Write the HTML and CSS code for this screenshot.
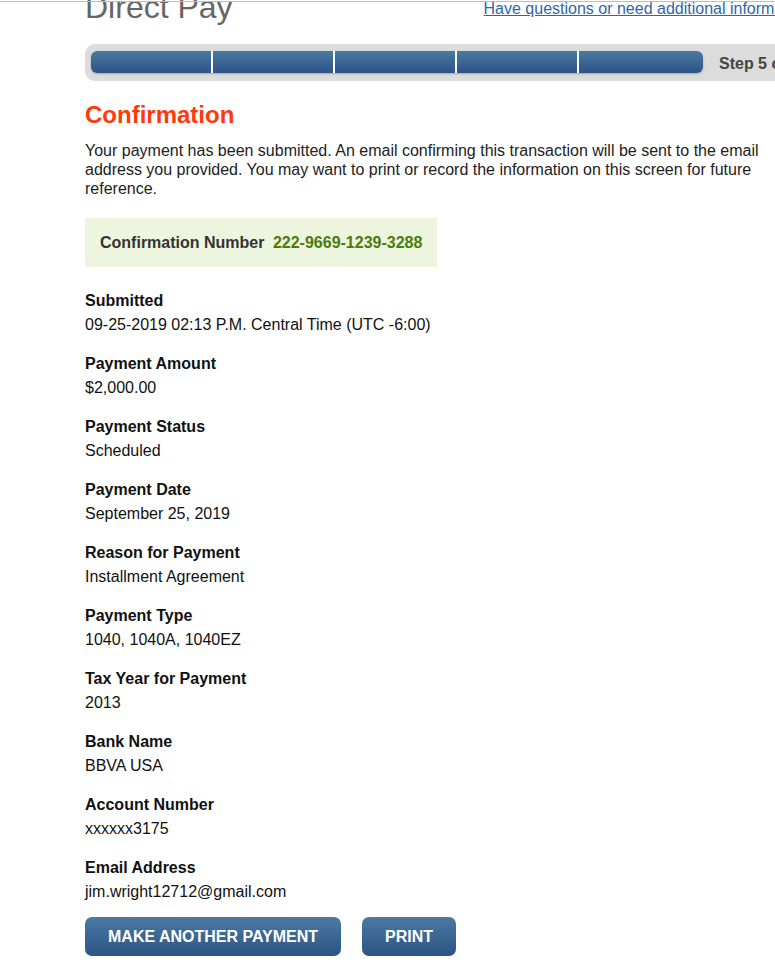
FILE: index.html
```html
<!DOCTYPE html>
<html lang="en">
<head>
<meta charset="utf-8">
<title>Direct Pay - Confirmation</title>
<link rel="stylesheet" href="styles.css">
</head>
<body>
<div class="topline"></div>
<div class="page">
  <header class="header">
    <h1 class="title">Direct Pay</h1>
    <a class="help-link" href="#">Have questions or need additional information?</a>
  </header>

  <div class="progress">
    <div class="progress-bar">
      <span class="seg"></span><span class="seg"></span><span class="seg"></span><span class="seg"></span><span class="seg seg-last"></span>
    </div>
    <span class="step">Step 5 of 5</span>
  </div>

  <h2 class="heading">Confirmation</h2>
  <p class="intro">Your payment has been submitted. An email confirming this transaction will be sent to the email address you provided. You may want to print or record the information on this screen for future reference.</p>

  <div class="conf-box">
    <span class="conf-label">Confirmation Number</span>
    <span class="conf-number">222-9669-1239-3288</span>
  </div>

  <dl class="details">
    <dt>Submitted</dt><dd>09-25-2019 02:13 P.M. Central Time (UTC -6:00)</dd>
    <dt>Payment Amount</dt><dd>$2,000.00</dd>
    <dt>Payment Status</dt><dd>Scheduled</dd>
    <dt>Payment Date</dt><dd>September 25, 2019</dd>
    <dt>Reason for Payment</dt><dd>Installment Agreement</dd>
    <dt>Payment Type</dt><dd>1040, 1040A, 1040EZ</dd>
    <dt>Tax Year for Payment</dt><dd>2013</dd>
    <dt>Bank Name</dt><dd>BBVA USA</dd>
    <dt>Account Number</dt><dd>xxxxxx3175</dd>
    <dt>Email Address</dt><dd>jim.wright12712@gmail.com</dd>
  </dl>

  <div class="actions">
    <button class="btn" type="button">MAKE ANOTHER PAYMENT</button>
    <button class="btn" type="button">PRINT</button>
  </div>
</div>
</body>
</html>
```

FILE: styles.css
```css
html, body {
  margin: 0;
  padding: 0;
  overflow: hidden;
  background: #ffffff;
}

body {
  font-family: "Liberation Sans", Arial, sans-serif;
  font-size: 16px;
  color: #1a1a1a;
}

.topline {
  position: fixed;
  top: 1px;
  left: 0;
  right: 0;
  height: 1px;
  background: #bdbdbd;
  z-index: 5;
}

.page {
  padding-left: 85px;
  width: 733px;
}

.header {
  display: flex;
  align-items: flex-start;
  justify-content: space-between;
  margin-top: -11px;
}

.title {
  margin: 0;
  font-size: 32px;
  line-height: 36px;
  font-weight: normal;
  color: #666666;
}

.help-link {
  margin-top: 11px;
  font-size: 16px;
  line-height: 18px;
  color: #2f66a8;
  text-decoration: underline;
  white-space: nowrap;
}

.progress {
  margin-top: 19px;
  display: flex;
  align-items: center;
  gap: 16px;
  background: #dcdcdc;
  border-radius: 10px;
  padding: 7px 6px 8px 6px;
}

.progress-bar {
  display: flex;
  gap: 2px;
  width: 612px;
  height: 22px;
  background: #ffffff;
  border-radius: 6px;
  overflow: hidden;
  box-shadow: 0 1px 2px rgba(0, 0, 0, 0.25);
}

.seg {
  width: 120px;
  background: linear-gradient(#4a7aa1, #2c5486);
}

.seg-last {
  width: auto;
  flex: 1;
}

.step {
  padding-top: 4px;
  font-weight: bold;
  font-size: 16px;
  color: #454545;
  white-space: nowrap;
}

.heading {
  margin: 20px 0 0 0;
  font-size: 24px;
  line-height: 28px;
  font-weight: bold;
  color: #ff3a0a;
}

.intro {
  margin: 12px 0 0 0;
  line-height: 19px;
  color: #222222;
  width: 680px;
}

.conf-box {
  display: inline-block;
  margin-top: 20px;
  padding: 15px 15px;
  line-height: 19px;
  background: #eef5de;
  font-weight: bold;
}

.conf-label {
  color: #333333;
  margin-right: 4px;
}

.conf-number {
  color: #4a7c0c;
}

.details {
  margin: 22px 0 0 0;
}

.details dt {
  font-weight: bold;
  line-height: 24px;
  color: #111111;
}

.details dd {
  margin: 0 0 15px 0;
  line-height: 24px;
  color: #111111;
}

.details dd:last-child {
  margin-bottom: 0;
}

.actions {
  margin-top: 13px;
  display: flex;
  gap: 21px;
}

.btn {
  font-family: "Liberation Sans", Arial, sans-serif;
  font-size: 16px;
  font-weight: bold;
  line-height: 19px;
  color: #ffffff;
  padding: 10px 23px;
  border: none;
  border-radius: 7px;
  background: linear-gradient(#4a7aa1, #2c5486);
  cursor: pointer;
}
```
